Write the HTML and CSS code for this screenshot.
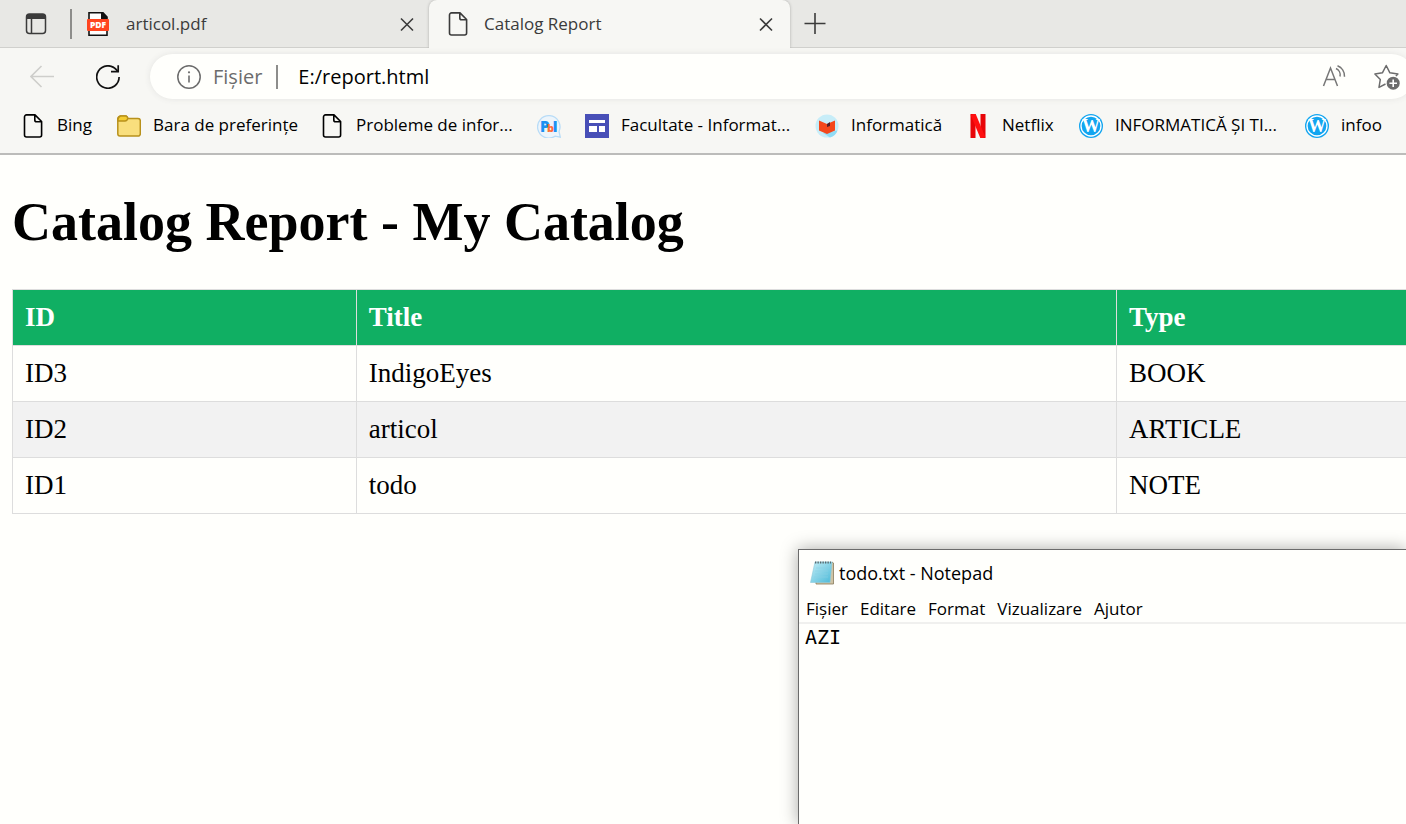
FILE: index.html
```html
<!DOCTYPE html>
<html lang="ro">
<head>
<meta charset="utf-8">
<title>Catalog Report</title>
<link rel="stylesheet" href="styles.css">
</head>
<body>
<svg class="defs" aria-hidden="true">
  <symbol id="page" viewBox="0 0 24 24"><path d="M5.500 .9H14L20.600 7.500V21a2 2 0 0 1-2 2H5.500a2 2 0 0 1-2-2V2.900a2 2 0 0 1 2-2zM13.800 1v4.900a1.800 1.800 0 0 0 1.800 1.800H20.500" fill="none" stroke="currentColor" stroke-width="1.600" stroke-linejoin="round"/></symbol>
  <symbol id="close" viewBox="0 0 24 24"><path d="M6 6.500l12 12M18 6.500L6 18.500" fill="none" stroke="currentColor" stroke-width="1.600"/></symbol>
</svg>
<header class="browser">
  <div class="tabs">
    <button class="icon-button" aria-label="Tab actions"><svg class="icon" viewBox="0 0 24 24"><rect x="2.500" y="2" width="19" height="19.500" rx="3" fill="none" stroke="#3b3b3b" stroke-width="1.500"/><path d="M2.500 7V4.500A2.500 2.500 0 0 1 5 2h14A2.500 2.500 0 0 1 21.500 4.500V7z" fill="#3b3b3b"/><path d="M7.500 7v14" stroke="#3b3b3b" stroke-width="1.500"/></svg></button>
    <span class="tab-divider"></span>
    <div class="tab">
      <svg class="icon" viewBox="0 0 24 24"><path d="M3 7V.800h14L21 5v2M3 18v5.200h18V18" fill="#fff" stroke="#111" stroke-width="1.600"/><path d="M15 1h2l4 4v2h-6z" fill="#111"/><rect x="1" y="7" width="22" height="12" rx="1" fill="#ff4520"/><text x="12" y="16.300" text-anchor="middle" font-family="Open Sans, sans-serif" font-size="8.500" font-weight="800" fill="#fff">PDF</text></svg>
      <span class="tab-title">articol.pdf</span>
      <button class="icon-button" aria-label="Close articol.pdf"><svg class="icon"><use href="#close"/></svg></button>
    </div>
    <div class="tab tab-active">
      <svg class="icon"><use href="#page"/></svg>
      <span class="tab-title">Catalog Report</span>
      <button class="icon-button" aria-label="Close Catalog Report"><svg class="icon"><use href="#close"/></svg></button>
    </div>
    <button class="icon-button new-tab" aria-label="New tab"><svg class="icon" viewBox="0 0 24 24"><path d="M1.500 11.500h21M12 1v21" stroke="#3b3b3b" stroke-width="1.600"/></svg></button>
  </div>
  <div class="toolbar">
    <button class="icon-button back" aria-label="Back" disabled><svg class="icon" viewBox="0 0 24 24"><path d="M24 11.500H1M11.500 1L1 11.500 11.500 22" fill="none" stroke="#cececb" stroke-width="1.600"/></svg></button>
    <button class="icon-button reload" aria-label="Reload"><svg class="icon" viewBox="0 0 24 24"><path d="M23.100 12A11.200 11.200 0 1 1 20.300 4.600L22 6.600" fill="none" stroke="#111" stroke-width="1.700"/><path d="M15 6.700h7.200V.200" fill="none" stroke="#111" stroke-width="1.700"/></svg></button>
    <div class="address">
      <svg class="icon" viewBox="0 0 24 24"><circle cx="12" cy="12" r="11.200" fill="none" stroke="#6c6c6c" stroke-width="1.500"/><path d="M12 10.500v7" stroke="#6c6c6c" stroke-width="1.600"/><circle cx="12" cy="7.300" r="1.100" fill="#6c6c6c"/></svg>
      <label class="scheme" for="url">Fișier</label>
      <span class="address-divider"></span>
      <input class="url" id="url" type="text" value="E:/report.html">
      <button class="icon-button read-aloud" aria-label="Read aloud"><svg class="icon" viewBox="0 0 24 24"><path d="M1.500 21L8.500 3 15.500 21M4 14.500h9.500M14 3.500a7 7 0 0 1 4 8M15.500 .8a11 11 0 0 1 7 11" fill="none" stroke="#777" stroke-width="1.500"/></svg></button>
      <button class="icon-button favorite" aria-label="Add to favorites"><svg class="icon icon-wide" viewBox="0 0 26 26"><path d="M11.500 20L5 23.400l1.300-7.900L.9 10l7.500-1.200L12.200 1.500l3.700 7.300 8 1.200-2 2" fill="none" stroke="#6c6c6c" stroke-width="1.500" stroke-linejoin="round"/><circle cx="19.200" cy="19.200" r="6.500" fill="#6c6c6c"/><path d="M15.400 19.200h7.600M19.200 15.400v7.600" stroke="#fff" stroke-width="1.600"/></svg></button>
    </div>
  </div>
  <nav class="bookmarks" aria-label="Favorites">
    <a class="bookmark" href="#"><svg class="icon"><use href="#page"/></svg><span>Bing</span></a>
    <a class="bookmark" href="#"><svg class="icon" viewBox="0 0 24 24"><path d="M.8 5.500A3 3 0 0 1 3.500 2H9l2 2.500h10a2.300 2.300 0 0 1 2.300 2.300v13a2.300 2.300 0 0 1-2.300 2.300H3a2.300 2.300 0 0 1-2.200-2.300z" fill="#f9df7d" stroke="#b8911b" stroke-width="1.500"/><path d="M3.500 2H9q2 1 1.800 2.500Q10 7 8 7H1Q.5 3 3.500 2z" fill="#f4cd31" stroke="#b8911b" stroke-width="1.400"/></svg><span>Bara de preferințe</span></a>
    <a class="bookmark" href="#"><svg class="icon"><use href="#page"/></svg><span>Probleme de infor...</span></a>
    <a class="bookmark" href="#" aria-label="PbInfo"><svg class="icon" viewBox="0 0 24 24"><path d="M18 22.200A11.200 11.200 0 1 1 22 17.500l1.300 5.700z" fill="#edf5fb" stroke="#b8dcf7" stroke-width="1.300"/><text y="17.500" font-family="Open Sans, sans-serif" font-weight="800"><tspan x="3" font-size="15" fill="#1c91f2">P</tspan><tspan x="10" font-size="11" fill="#ff6e38">b</tspan><tspan x="15.500" font-size="15" fill="#1c91f2">I</tspan></text></svg></a>
    <a class="bookmark" href="#"><svg class="icon" viewBox="0 0 24 24"><path d="M0 0h24v24H0z" fill="#484fb7"/><path d="M4 6h16v3H4zM4 12h8v6H4zM14 12h6v6h-6z" fill="#fff"/></svg><span>Facultate - Informat...</span></a>
    <a class="bookmark" href="#"><svg class="icon" viewBox="0 0 24 24"><circle cx="12" cy="12" r="11.500" fill="#c7edf8"/><path d="M8 19l7 4.500a11 11 0 0 0 7.500-7z" fill="#91dcf5"/><path d="M4 6.500l8 3.500 8-3.500v10L12 20l-8-3.500z" fill="#f4471b"/><path d="M12 10l3-2v4l-3 1z" fill="#54202a"/></svg><span>Informatică</span></a>
    <a class="bookmark" href="#"><svg class="icon" viewBox="0 0 24 24"><path d="M7 0v24M17 0v24" stroke="#e80508" stroke-width="5"/><path d="M7 0l10 24" stroke="#ff1010" stroke-width="5"/></svg><span>Netflix</span></a>
    <a class="bookmark" href="#"><svg class="icon" viewBox="0 0 24 24"><circle cx="12" cy="12" r="12" fill="#12a5f0"/><circle cx="12" cy="12" r="10" fill="none" stroke="#fff" stroke-width="1.300"/><text x="12" y="18" text-anchor="middle" font-family="Liberation Serif, serif" font-weight="700" font-size="18" fill="#fff">W</text></svg><span>INFORMATICĂ ȘI TI...</span></a>
    <a class="bookmark" href="#"><svg class="icon" viewBox="0 0 24 24"><circle cx="12" cy="12" r="12" fill="#12a5f0"/><circle cx="12" cy="12" r="10" fill="none" stroke="#fff" stroke-width="1.300"/><text x="12" y="18" text-anchor="middle" font-family="Liberation Serif, serif" font-weight="700" font-size="18" fill="#fff">W</text></svg><span>infoo</span></a>
  </nav>
</header>
<main class="report">
  <h1 class="report-title">Catalog Report - My Catalog</h1>
  <table class="catalog">
    <colgroup><col class="col-id"><col class="col-title"><col></colgroup>
    <thead><tr><th>ID</th><th>Title</th><th>Type</th></tr></thead>
    <tbody>
      <tr><td>ID3</td><td>IndigoEyes</td><td>BOOK</td></tr>
      <tr><td>ID2</td><td>articol</td><td>ARTICLE</td></tr>
      <tr><td>ID1</td><td>todo</td><td>NOTE</td></tr>
    </tbody>
  </table>
</main>
<section class="notepad" aria-label="Notepad">
  <div class="notepad-title">
    <svg class="icon" viewBox="0 0 24 24"><defs><linearGradient id="sheet" x2="1" y2="1"><stop stop-color="#c4eef6"/><stop offset="1" stop-color="#4bb9d8"/></linearGradient></defs><path d="M22 1l1.500 1v21H6v-2z" fill="#cfc3a4" stroke="#887b5c" stroke-width=".8"/><path d="M5 1h17l-2 20.500H.5z" fill="url(#sheet)" stroke="#8ccadb" stroke-width=".6"/><path d="M6 7h13M5 10h13M5 13h13M4 16h14" stroke="#8bd2e4" stroke-width=".6"/><path d="M5 1.500h16" stroke="#59676b" stroke-width="2" stroke-dasharray="1.300 1.200"/></svg>
    <span>todo.txt - Notepad</span>
  </div>
  <div class="notepad-menu">
    <button class="menu-item">Fișier</button><button class="menu-item">Editare</button><button class="menu-item">Format</button><button class="menu-item">Vizualizare</button><button class="menu-item">Ajutor</button>
  </div>
  <textarea class="notepad-text" aria-label="Text" spellcheck="false">AZI</textarea>
</section>
</body>
</html>
```
FILE: styles.css
```css
* { box-sizing: border-box; }
body {
  margin: 0;
  min-height: 100vh;
  overflow: hidden;
  background: #fffffc;
  color: #000;
  font-family: "Open Sans", "Noto Sans", sans-serif;
}
button, input, textarea { font: inherit; color: inherit; border: 0; background: none; padding: 0; outline: 0; }
.defs { position: absolute; width: 0; height: 0; }
.icon { width: 24px; height: 24px; flex: none; display: block; }
.icon-wide { width: 26px; height: 26px; }
.icon-button { flex: none; display: block; }

.browser { background: #f7f7f4; border-bottom: 2px solid #bcbcba; overflow: hidden; }
.tabs { display: flex; height: 48px; background: #e8e8e5; box-shadow: inset 0 -1px #d0d0cd; align-items: center; padding-left: 24px; color: #3b3b3b; }
.tab-divider { width: 2px; height: 30px; margin-left: 22px; background: #8d8d8b; }
.tab { display: flex; align-items: center; flex: 0 0 357px; height: 48px; padding: 0 10px 0 14px; font-size: 17px; }
.tab-title { flex: 1; padding-left: 16px; line-height: 24px; }
.tab .icon-button { color: #3b3b3b; }
.tab-active { flex-basis: 361px; padding: 0 12px 0 17px; background: #f7f7f4; border-radius: 8px 8px 0 0; box-shadow: 0 0 3px #aaaaa8; clip-path: inset(0 -4px); }
.tab-active .tab-title { padding-left: 14px; }
.new-tab { margin-left: 13px; }

.toolbar { display: flex; align-items: center; padding-top: 6px; }
.back { margin-left: 30px; }
.reload { margin-left: 42px; }
.address { flex: 1; display: flex; align-items: center; height: 45px; margin: 0 -8px 0 30px; padding: 0 14px 0 27px; background: #fffffc; border-radius: 24px; box-shadow: 0 0 6px #e4e4e1; }
.scheme { margin-left: 12px; font-size: 20px; color: #6c6c6c; }
.address-divider { width: 2px; height: 24px; margin: 0 20px 0 14px; background: #8d8d8b; }
.url { flex: 1; min-width: 0; font-size: 20px; }
.favorite { margin-left: 28px; }

.bookmarks {
  display: grid;
  grid-template-columns: 96px 203px 217px 48px 230px 151px 113px 226px auto;
  align-items: center;
  height: 54px;
  padding-left: 21px;
}
.bookmark { display: flex; align-items: center; gap: 12px; font-size: 17px; line-height: 22px; white-space: nowrap; color: #000; text-decoration: none; }
.bookmark span { padding-bottom: 2px; }

.report { padding: 36px 0 0 12px; font-family: "Liberation Serif", "Times New Roman", serif; overflow: hidden; }
.report-title { margin: 0 0 36px; font-size: 54px; line-height: 62px; font-weight: 700; }
.catalog { width: 102%; border-collapse: collapse; table-layout: fixed; font-size: 27px; line-height: 31px; }
.col-id { width: 24.200%; }
.col-title { width: 53.500%; }
.catalog th, .catalog td { border: 1px solid #ddd; padding: 12px; text-align: left; }
.catalog th { background: #10af63; color: #fff; }
.catalog tbody tr:nth-child(even) { background: #f2f2f2; }

.notepad {
  position: absolute;
  left: 798px;
  top: 549px;
  right: 0;
  bottom: 0;
  display: flex;
  flex-direction: column;
  background: #fffffc;
  border: solid #6b6b6b;
  border-width: 1px 0 0 1px;
  box-shadow: 0 0 16px #a9a9a7;
}
.notepad-title { display: flex; align-items: center; gap: 5px; height: 45px; padding-left: 11px; font-size: 18px; }
.notepad-menu { display: flex; gap: 12px; height: 29px; padding-left: 7px; border-bottom: 2px solid #f0f0ee; font-size: 17px; }
.notepad-text { flex: 1; resize: none; padding: 1px 6px; font-family: "DejaVu Sans Mono", monospace; font-size: 20px; line-height: 24px; }
```
